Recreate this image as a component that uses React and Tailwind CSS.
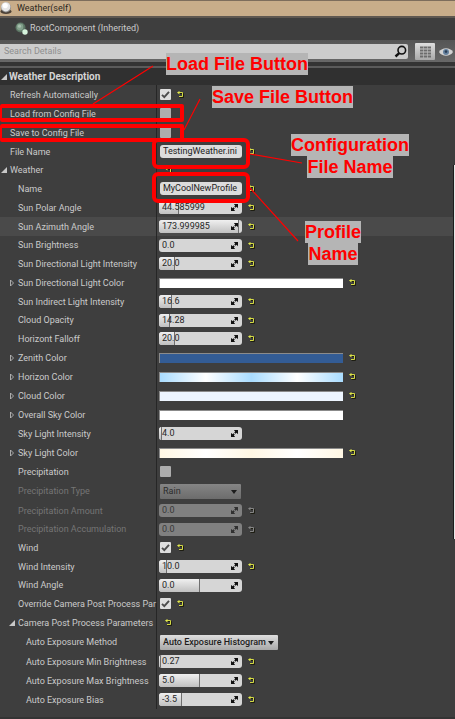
import React from "react";

const ROWS = [
  { label: "Refresh Automatically", kind: "check", on: true, reset: true, depth: 0 },
  { label: "Load from Config File", kind: "check", depth: 0 },
  { label: "Save to Config File", kind: "check", depth: 0 },
  { label: "File Name", kind: "text", value: "TestingWeather.ini", reset: true, depth: 0 },
  { label: "Weather", kind: "group", reset: true, depth: 0, size: "short", open: true },
  { label: "Name", kind: "text", value: "MyCoolNewProfile", reset: true, depth: 1 },
  { label: "Sun Polar Angle", kind: "spin", value: "44.585999", fill: 20, reset: true, depth: 1 },
  { label: "Sun Azimuth Angle", kind: "spin", value: "173.999985", fill: 80, reset: true, depth: 1, active: true },
  { label: "Sun Brightness", kind: "spin", value: "0.0", fill: 0, reset: true, depth: 1, size: "short" },
  { label: "Sun Directional Light Intensity", kind: "spin", value: "20.0", fill: 16, reset: true, depth: 1 },
  { label: "Sun Directional Light Color", kind: "color", paint: "bg-white", reset: true, depth: 1 },
  { label: "Sun Indirect Light Intensity", kind: "spin", value: "16.6", fill: 13, reset: true, depth: 1 },
  { label: "Cloud Opacity", kind: "spin", value: "14.28", fill: 11, reset: true, depth: 1, size: "short" },
  { label: "Horizont Falloff", kind: "spin", value: "20.0", fill: 16, reset: true, depth: 1 },
  { label: "Zenith Color", kind: "color", paint: "bg-[#335c95]", reset: true, depth: 1 },
  { label: "Horizon Color", kind: "color", paint: "bg-[linear-gradient(90deg,#a9dcff,#ffffff_25%,#a9dcff_50%,#ffffff_75%,#a9dcff)]", reset: true, depth: 1 },
  { label: "Cloud Color", kind: "color", paint: "bg-[#edf5ff]", reset: true, depth: 1 },
  { label: "Overall Sky Color", kind: "color", paint: "bg-white", depth: 1 },
  { label: "Sky Light Intensity", kind: "spin", value: "4.0", fill: 3, depth: 1 },
  { label: "Sky Light Color", kind: "color", paint: "bg-[linear-gradient(90deg,#fff7e3,#ffffff_25%,#fff7e3_50%,#ffffff_75%,#fff7e3)]", reset: true, depth: 1 },
  { label: "Precipitation", kind: "check", depth: 1 },
  { label: "Precipitation Type", kind: "select", value: "Rain", depth: 1, size: "tall", off: true },
  { label: "Precipitation Amount", kind: "spin", value: "0.0", fill: 0, reset: true, depth: 1, off: true },
  { label: "Precipitation Accumulation", kind: "spin", value: "0.0", fill: 0, reset: true, depth: 1, size: "short", off: true },
  { label: "Wind", kind: "check", on: true, reset: true, depth: 1 },
  { label: "Wind Intensity", kind: "spin", value: "10.0", fill: 8, reset: true, depth: 1 },
  { label: "Wind Angle", kind: "spin", value: "0.0", fill: 41, depth: 1, size: "short" },
  { label: "Override Camera Post Process Par", kind: "check", on: true, reset: true, depth: 1 },
  { label: "Camera Post Process Parameters", kind: "group", reset: true, depth: 1, open: true },
  { label: "Auto Exposure Method", kind: "select", value: "Auto Exposure Histogram", depth: 2, size: "tall" },
  { label: "Auto Exposure Min Brightness", kind: "spin", value: "0.27", fill: 2, reset: true, depth: 2 },
  { label: "Auto Exposure Max Brightness", kind: "spin", value: "5.0", fill: 41, reset: true, depth: 2 },
  { label: "Auto Exposure Bias", kind: "spin", value: "-3.5", fill: 23, reset: true, depth: 2 },
];

const HEIGHTS = { short: "h-[18px]", normal: "h-[19px]", tall: "h-5" };
const INDENTS = ["pl-[10px]", "pl-[18px]", "pl-[26px]"];
const TWISTIES = ["left-[1px]", "left-[9px]"];

function ResetButton({ off }) {
  return (
    <button type="button" aria-label="Reset to default" disabled={off} className="ml-[6px] shrink-0">
      <svg width="7" height="7" viewBox="0 0 7 7" fill="none" className="block">
        <path d="M2 2.5H6.5V6.5H2.5" stroke="#1d1d12" strokeWidth="1" />
        <path d="M1 1.5H5.5V5.5H2" stroke={off ? "#858585" : "#d3d944"} strokeWidth="1" />
        <path d="M0 1.5L2.5 0V3.5Z" fill={off ? "#858585" : "#e4ea4c"} />
      </svg>
    </button>
  );
}

function Twisty({ open }) {
  return open ? (
    <svg width="6" height="6" viewBox="0 0 6 6" className="block">
      <path d="M6 0V6H0Z" fill="#c8c8c8" />
    </svg>
  ) : (
    <svg width="6" height="8" viewBox="0 0 6 8" className="block">
      <path d="M1.5 1L4.5 4L1.5 7Z" fill="none" stroke="#b8b8b8" strokeWidth="0.9" />
    </svg>
  );
}

function Spin({ id, row }) {
  return (
    <div
      className={`relative flex h-[13px] w-[83px] items-center overflow-hidden rounded-[3px] ${
        row.off ? "bg-[#808080]" : "bg-[#d6d6d6]"
      }`}
    >
      {row.fill > 0 && (
        <div
          className="absolute inset-y-0 left-0 border-r border-[#6f6f6f] bg-linear-to-b from-[#f0f0f0] to-[#c0c0c0]"
          style={{ width: row.fill }}
        />
      )}
      <input
        id={id}
        defaultValue={row.value}
        disabled={row.off}
        className={`relative min-w-0 flex-1 bg-transparent pl-[3px] text-[9px] leading-[13px] outline-none ${
          row.off ? "text-[#383838]" : "text-[#262626]"
        }`}
      />
      <svg width="7" height="7" viewBox="0 0 7 7" className="relative mr-[4px] shrink-0">
        <path d="M2.8 0H7V4.2L5.6 2.8L4.6 3.8L3.2 2.4L4.2 1.4Z M0 2.8V7H4.2L2.8 5.6L3.8 4.6L2.4 3.2L1.4 4.2Z" fill={row.off ? "#303030" : "#111"} />
      </svg>
    </div>
  );
}

function Check({ id, on }) {
  return (
    <span className="relative ml-[1px] block size-[11px]">
      <input
        id={id}
        type="checkbox"
        defaultChecked={on}
        className="peer block size-[11px] appearance-none rounded-[1px] bg-[#adadad] checked:bg-[#dedede]"
      />
      <svg
        width="11"
        height="11"
        viewBox="0 0 11 11"
        className="pointer-events-none absolute inset-0 hidden peer-checked:block"
      >
        <path d="M2 5.8L4.3 8.2L9 2.8" fill="none" stroke="#4c4c4c" strokeWidth="1.9" />
      </svg>
    </span>
  );
}

function Select({ id, row }) {
  return (
    <span className="relative ml-[1px] block">
      <select
        id={id}
        disabled={row.off}
        className={`block h-[15px] appearance-none rounded-[1px] pl-[3px] text-[9px] leading-[15px] opacity-100 ${
          row.off
            ? "w-[81px] bg-linear-to-b from-[#858585] to-[#6c6c6c] text-[#2c2c2c]"
            : "w-[118px] bg-linear-to-b from-[#dedede] to-[#a8a8a8] font-medium text-[#1c1c1c]"
        }`}
      >
        <option>{row.value}</option>
      </select>
      <svg
        width="6"
        height="4"
        viewBox="0 0 6 4"
        className="pointer-events-none absolute top-[6px] right-[4px]"
      >
        <path d="M0 0H6L3 4Z" fill="#1c1c1c" />
      </svg>
    </span>
  );
}

function Control({ id, row }) {
  if (row.kind === "check") return <Check id={id} on={row.on} />;
  if (row.kind === "spin") return <Spin id={id} row={row} />;
  if (row.kind === "select") return <Select id={id} row={row} />;
  if (row.kind === "color")
    return (
      <button
        id={id}
        type="button"
        className={`h-[10px] w-[184px] border-t border-l border-[#8b8b8b] ${row.paint}`}
      />
    );
  if (row.kind === "text")
    return (
      <input
        id={id}
        defaultValue={row.value}
        className="ml-[1px] h-[13px] w-[82px] rounded-[3px] bg-[#dcdcdc] pl-[3px] text-[9px] leading-[13px] text-[#222] outline-none"
      />
    );
  return null;
}

function Row({ row, index }) {
  const id = `prop-${index}`;
  const twisty = row.kind === "group" || row.kind === "color";
  return (
    <div className={`flex ${HEIGHTS[row.size || "normal"]} ${row.active ? "bg-[#4a4a4a]" : ""}`}>
      <div
        className={`relative flex w-[157px] shrink-0 items-center border-r border-[#262626] ${INDENTS[row.depth]}`}
      >
        {twisty && (
          <button
            type="button"
            aria-label={`Toggle ${row.label}`}
            className={`absolute ${row.kind === "group" ? TWISTIES[row.depth] : "left-[9px]"}`}
          >
            <Twisty open={row.open} />
          </button>
        )}
        <label
          htmlFor={row.kind === "group" ? undefined : id}
          className={`whitespace-nowrap ${row.off ? "text-[#757575]" : "text-[#cbcbcb]"}`}
        >
          {row.label}
        </label>
      </div>
      <div className="flex flex-1 items-center pl-[2px]">
        <Control id={id} row={row} />
        {row.reset && <ResetButton off={row.off} />}
      </div>
    </div>
  );
}

function Note({ className, lines }) {
  return (
    <div className={`absolute flex flex-col items-center ${className}`}>
      {lines.map((line) => (
        <span key={line} className="bg-[#b5b5b5] whitespace-nowrap">
          {line}
        </span>
      ))}
    </div>
  );
}

function Annotations() {
  return (
    <div className="pointer-events-none absolute inset-0 font-['Liberation_Sans',Arial,sans-serif] text-[18px] leading-[22px] font-bold text-[#ff0000]">
      <div className="absolute top-[104px] left-0 h-[18px] w-[184px] rounded-[2px] border-4 border-l-2 border-[#ff0000]" />
      <div className="absolute top-[124px] left-0 h-[18px] w-[184px] rounded-[2px] border-4 border-l-2 border-[#ff0000]" />
      <div className="absolute top-[138px] left-[152px] h-[31px] w-[98px] rounded-[6px] border-4 border-[#ff0000]" />
      <div className="absolute top-[172px] left-[152px] h-[31px] w-[98px] rounded-[6px] border-4 border-[#ff0000]" />
      <svg width="455" height="719" viewBox="0 0 455 719" className="absolute top-0 left-0">
        <path
          d="M93 104L153 66M184 130L200 99M250 154L302 163M250 188L298 241"
          fill="none"
          stroke="#ff0000"
          strokeWidth="1.2"
        />
      </svg>
      <Note className="top-[53px] left-[166px]" lines={["Load File Button"]} />
      <Note className="top-[86px] left-[212px]" lines={["Save File Button"]} />
      <Note className="top-[134px] left-[291px]" lines={["Configuration", "File Name"]} />
      <Note className="top-[221px] left-[305px]" lines={["Profile", "Name"]} />
    </div>
  );
}

export default function App() {
  return (
    <div className="relative min-h-screen bg-[#3e3e3e] font-[Roboto,sans-serif] text-[9px] leading-[12px] text-[#cbcbcb]">
      <div className="flex h-[18px] items-center border-t border-b-2 border-t-[#7d6d5c] border-b-[#5f5851] bg-[#c8ad8a] pb-[2px] text-[#2b2620]">
        <svg width="12" height="14" viewBox="0 0 12 14" className="mr-[5px]">
          <ellipse cx="6" cy="10.5" rx="5.5" ry="2.5" fill="#4b4036" />
          <circle cx="6" cy="6.5" r="5" fill="#8c8c8c" />
          <circle cx="5.8" cy="5.8" r="4.6" fill="#e6e6e6" />
          <circle cx="5.2" cy="4.6" r="2.6" fill="#ffffff" />
        </svg>
        Weather(self)
      </div>

      <div className="flex h-[22px] items-center pb-[2px] pl-[15px]">
        <svg width="13" height="13" viewBox="0 0 13 13" className="mr-[2px]">
          <circle cx="5.5" cy="5.5" r="5" fill="#5c7564" />
          <circle cx="5" cy="5" r="3.4" fill="#82a08b" />
          <circle cx="4.5" cy="4.2" r="1.6" fill="#a7bfae" />
          <circle cx="10" cy="10" r="2.7" fill="#d5f3dc" />
        </svg>
        RootComponent (Inherited)
      </div>

      <div className="flex h-[22px] items-center bg-linear-to-b from-[#555] to-[#686868] pt-[1px] pr-[2px]">
        <div className="flex h-[15px] flex-1 items-center rounded-r-[2px] bg-[#cccccc]">
          <input
            type="search"
            aria-label="Search Details"
            placeholder="Search Details"
            className="min-w-0 flex-1 bg-transparent pl-[4px] text-[9px] leading-[15px] text-[#333] outline-none placeholder:text-[#8f8f8f]"
          />
          <svg width="13" height="13" viewBox="0 0 13 13" className="mr-[1px]">
            <circle cx="7.8" cy="5.2" r="3.8" fill="none" stroke="#111" strokeWidth="1.6" />
            <path d="M5.2 8.2L1.5 11.5" stroke="#111" strokeWidth="2.4" />
          </svg>
        </div>
        <button
          type="button"
          aria-label="Property matrix"
          className="ml-[7px] flex h-[17px] w-5 items-center justify-center rounded-[1px] bg-linear-to-b from-[#dedede] to-[#a9a9a9]"
        >
          <svg width="11" height="12" viewBox="0 0 11 12">
            <path d="M0 1.5H11M0 4.5H11M0 7.5H11M0 10.5H11" stroke="#6c6c6c" strokeWidth="2" />
            <path d="M3.5 0V12M7.5 0V12" stroke="#b9b9b9" strokeWidth="0.7" />
          </svg>
        </button>
        <button type="button" aria-label="View options" className="ml-[4px]">
          <svg width="14" height="10" viewBox="0 0 14 10" className="block">
            <path d="M0 5C3 0 11 0 14 5C11 10 3 10 0 5Z" fill="#d2d2d2" />
            <circle cx="7" cy="5" r="3" fill="#64809e" />
            <circle cx="7" cy="4.6" r="1.3" fill="#2a3d55" />
          </svg>
        </button>
      </div>

      <div className="h-[6px] border-b-2 border-[#5b5b5b] bg-[#343434]" />

      <div className="flex h-[17px] items-center bg-[#303030] pl-[1px] text-[10px] font-bold text-[#d4d4d4]">
        <button type="button" aria-label="Toggle Weather Description" className="mr-[2px]">
          <Twisty open />
        </button>
        Weather Description
      </div>

      <div className="pb-2">
        {ROWS.map((row, index) => (
          <Row key={row.label} row={row} index={index} />
        ))}
      </div>
      <div className="h-[2px] bg-[#343434]" />

      <div className="absolute top-[165px] right-0 h-[374px] w-[2px] border-l border-[#1c1c1c] bg-[#e6e6e6]" />
      <Annotations />
    </div>
  );
}
